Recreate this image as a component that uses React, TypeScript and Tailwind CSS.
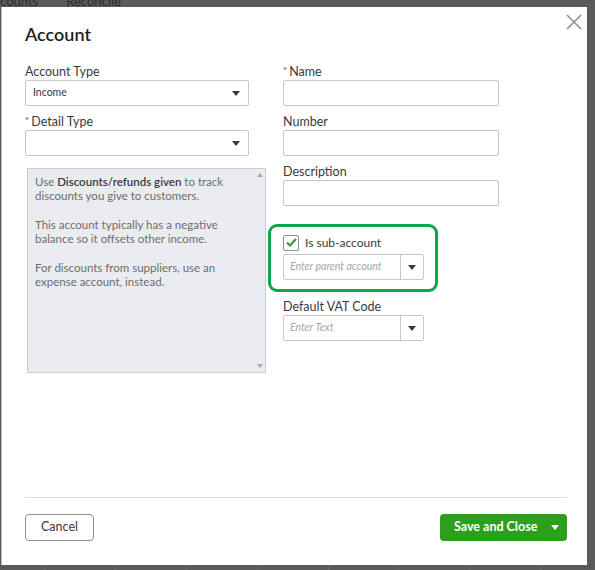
import React from "react";

const font = { fontFamily: "Lato, 'Open Sans', Arial, sans-serif" };

function Caret({ className = "" }: { className?: string }) {
  return (
    <svg width="8" height="5" viewBox="0 0 8 5" className={className}>
      <path d="M0 0 L8 0 L4 5 Z" fill="#393a3d" />
    </svg>
  );
}

function Label({ text, required }: { text: string; required?: boolean }) {
  return (
    <div className="h-[16px] text-[12.5px] leading-[15px] text-[#393a3d] flex items-start">
      {required && <span className="text-[#e02020] text-[10px] leading-[12px] mr-[2px]">*</span>}
      <span>{text}</span>
    </div>
  );
}

function TextBox({ w }: { w: string }) {
  return <div className={`${w} h-[26px] border border-[#c4c7cc] rounded-[2px] bg-white`} />;
}

function Combo({ placeholder }: { placeholder: string }) {
  return (
    <div className="w-[141px] h-[26px] border border-[#c4c7cc] rounded-[2px] bg-white flex">
      <div className="flex-1 flex items-center pl-[6px] text-[10.5px] italic text-[#a3a6ab]">{placeholder}</div>
      <div className="w-[23px] border-l border-[#c4c7cc] flex items-center justify-center">
        <Caret />
      </div>
    </div>
  );
}

export default function App() {
  return (
    <div className="w-[595px] h-[570px] bg-[#5a5a5a] relative overflow-hidden" style={font}>
      {/* page behind the dialog */}
      <div className="absolute left-0 top-[-8px] h-[15px] flex text-[13px] text-[#2a2a2a]">
        <span className="ml-[-6px]">ccounts</span>
        <span className="ml-[28px]">Reconcile</span>
      </div>
      <div className="absolute left-0 right-0 bottom-0 h-[5px] flex">
        {[45, 71, 71, 71, 71, 70, 71, 71].map((w, i) => (
          <div key={i} style={{ width: w }} className="h-full border-r border-[#6a6a6a]" />
        ))}
      </div>

      {/* dialog */}
      <div className="absolute left-[1px] top-[7px] w-[586px] h-[558px] bg-white border-l border-[#bdbdbd] flex flex-col pl-[23px] pr-[20px]">
        <div className="flex items-start justify-between pt-[16px] h-[57px]">
          <h1 className="text-[18px] leading-[22px] font-semibold text-[#1f1f1f]">Account</h1>
          <svg width="16" height="16" viewBox="0 0 16 16" className="mt-[-9px] mr-[-15px]">
            <path d="M1 1 L15 15 M15 1 L1 15" stroke="#8d9096" strokeWidth="1.6" />
          </svg>
        </div>

        <div className="flex flex-1">
          {/* left column */}
          <div className="w-[258px] flex flex-col">
            <Label text="Account Type" />
            <div className="w-[224px] h-[26px] border border-[#c4c7cc] rounded-[2px] flex items-center justify-between pl-[7px] pr-[8px] text-[10.5px] text-[#393a3d]">
              <span>Income</span>
              <Caret />
            </div>
            <div className="mt-[8px]">
              <Label text="Detail Type" required />
            </div>
            <div className="w-[224px] h-[26px] border border-[#c4c7cc] rounded-[2px] flex items-center justify-end pr-[8px]">
              <Caret />
            </div>
            <div className="mt-[12px] ml-[2px] w-[239px] h-[205px] bg-[#ebecef] border border-[#c9ccd1] flex">
              <div className="flex-1 pl-[7px] pt-[6px] text-[11.5px] leading-[13.5px] text-[#6b6c72]">
                <p>
                  Use <span className="font-semibold text-[#393a3d]">Discounts/refunds given</span> to track discounts you give to customers.
                </p>
                <p className="mt-[16px]">This account typically has a negative balance so it offsets other income.</p>
                <p className="mt-[16px]">For discounts from suppliers, use an expense account, instead.</p>
              </div>
              <div className="w-[11px] flex flex-col items-center justify-between py-[4px]">
                <svg width="6" height="4" viewBox="0 0 6 4"><path d="M0 4 L6 4 L3 0 Z" fill="#a6a8ad" /></svg>
                <svg width="6" height="4" viewBox="0 0 6 4"><path d="M0 0 L6 0 L3 4 Z" fill="#a6a8ad" /></svg>
              </div>
            </div>
          </div>

          {/* right column */}
          <div className="flex flex-col relative">
            <Label text="Name" required />
            <TextBox w="w-[216px]" />
            <div className="mt-[8px]"><Label text="Number" /></div>
            <TextBox w="w-[216px]" />
            <div className="mt-[8px]"><Label text="Description" /></div>
            <TextBox w="w-[216px]" />

            <div className="mt-[28px] flex items-center h-[17px]">
              <div className="w-[16px] h-[16px] border border-[#8d9096] rounded-[2px] bg-white flex items-center justify-center">
                <svg width="11" height="9" viewBox="0 0 11 9">
                  <path d="M1 4.5 L4 7.5 L10 1" stroke="#2ca01c" strokeWidth="2" fill="none" />
                </svg>
              </div>
              <span className="ml-[6px] text-[12px] text-[#393a3d]">Is sub-account</span>
            </div>
            <div className="mt-[3px]">
              <Combo placeholder="Enter parent account" />
            </div>

            <div className="mt-[19px]"><Label text="Default VAT Code" /></div>
            <Combo placeholder="Enter Text" />

            {/* highlight around the sub-account controls */}
            <div className="absolute left-[-15px] top-[160px] w-[170px] h-[68px] border-[3px] border-[#12a64a] rounded-[9px] pointer-events-none" />
          </div>
        </div>

        <div className="border-t border-[#dcdddf] h-[68px] flex items-start justify-between pt-[16px]">
          <button className="w-[69px] h-[27px] border border-[#8d9096] rounded-[4px] text-[12.5px] text-[#393a3d] bg-white">
            Cancel
          </button>
          <button className="w-[127px] h-[27px] rounded-[4px] bg-[#2ca01c] text-white text-[12.5px] font-bold flex items-center pl-[14px] pr-[8px] justify-between">
            <span>Save and Close</span>
            <svg width="8" height="5" viewBox="0 0 8 5"><path d="M0 0 L8 0 L4 5 Z" fill="#fff" /></svg>
          </button>
        </div>
      </div>
    </div>
  );
}
